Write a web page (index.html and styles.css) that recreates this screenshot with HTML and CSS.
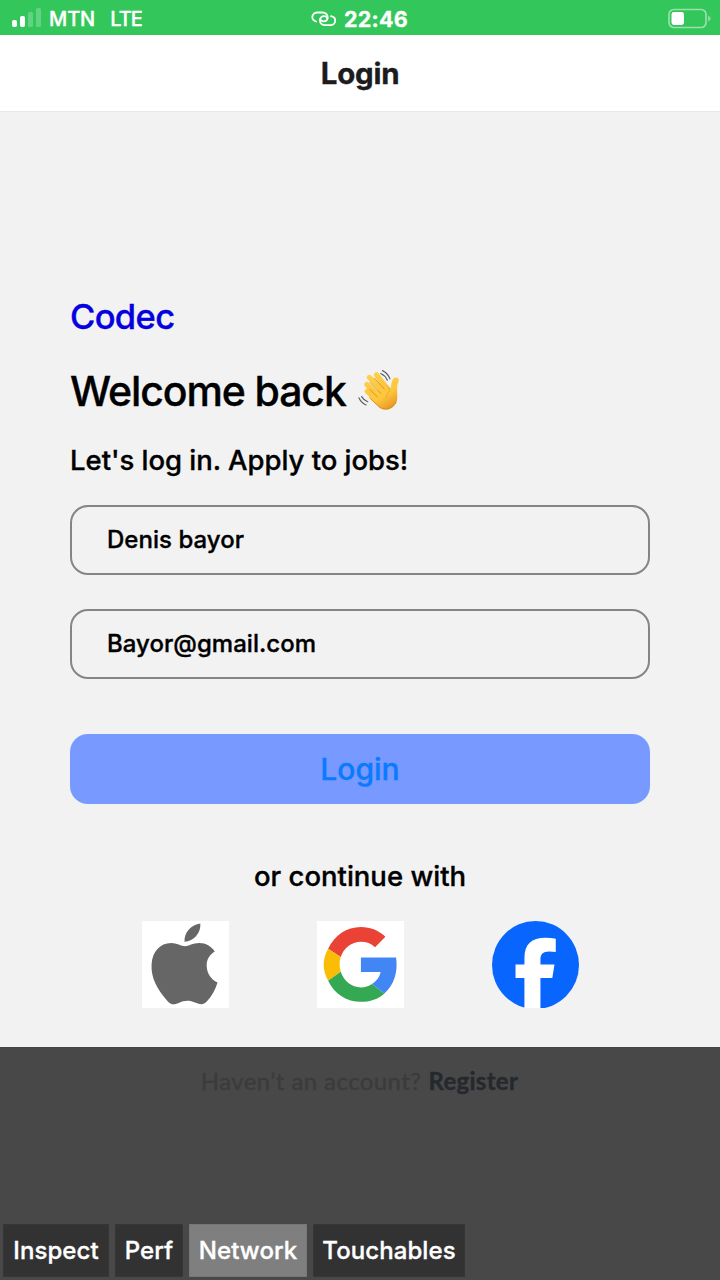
FILE: index.html
```html
<!DOCTYPE html>
<html lang="en">
<head>
<meta charset="utf-8">
<title>Login</title>
<link rel="stylesheet" href="styles.css">
</head>
<body>
<div class="screen">
  <div class="status">
    <div class="carrier">
      <svg class="signal" width="32" height="20" viewBox="0 0 32 20" fill="#fff"><rect x="1" y="12" width="5" height="7" rx="1.8"/><rect x="9" y="8" width="5" height="11" rx="1.8"/><g opacity=".23"><rect x="17" y="4" width="5" height="15" rx="1.5"/><rect x="25" y="0" width="5" height="19" rx="1.5"/></g></svg>
      <span class="mtn">MTN</span><span class="lte">LTE</span>
    </div>
    <div class="clock">
      <svg width="26" height="18" viewBox="0 0 26 18" fill="none" stroke="#fff" stroke-width="1.8" stroke-linecap="round"><path d="M5.2 11.5C2.7 10.8 1.3 9.2 1.3 7.1 1.3 4.4 3.4 2.5 6.1 2.5h5.4c3 0 5.2 2 5.2 4.7 0 2.4-1.7 4.2-4.2 4.2-1.8 0-2.8-1.1-3.1-2.5"/><path d="M20 6.2c2.6.5 4.2 2 4.2 4.2 0 2.7-2.1 4.7-4.9 4.7h-5.1c-3 0-5.3-1.9-5.3-4.7 0-2.4 1.8-4.2 4.3-4.2 1.8 0 2.9 1.1 3.2 2.5"/></svg>
      <span class="time">22:46</span>
    </div>
    <svg class="battery" width="44" height="22" viewBox="0 0 44 22"><rect x="1" y="1.5" width="37" height="18" rx="5" fill="none" stroke="#9be0ad" stroke-width="1.7"/><rect x="3.5" y="4" width="12.5" height="13" rx="2.4" fill="#fff"/><path d="M40 7.5q2.7.8 2.7 3t-2.7 3z" fill="#8bdba0"/></svg>
  </div>
  <header class="nav"><span class="nav-title">Login</span></header>
  <main class="content">
    <div class="brand"><span>Codec</span></div>
    <h1 class="welcome"><span>Welcome back</span>
      <svg class="wave" width="44" height="44" viewBox="0 0 44 44" role="img" aria-label="Waving hand">
        <defs><linearGradient id="skin" x1="0" y1="0" x2=".6" y2="1"><stop stop-color="#ffd24d"/><stop offset=".65" stop-color="#fdc63c"/><stop offset="1" stop-color="#e89b28"/></linearGradient></defs>
        <g stroke-linecap="round" fill="none">
          <g stroke="url(#skin)" stroke-width="5.2"><path d="M9.3 22.2 19 31M8.8 15.5l14 13M11.3 8.4 27 24M18.5 5.8l11.7 15"/></g>
          <path d="M14 24.7 28 16.5 32 22C33 18 33.5 12 35.3 9.7 36.8 7.8 40.7 8.3 40.7 10.6 40.7 13.5 39.1 15.3 39.1 19.5 39.2 28 40.3 31.7 36.8 36 33.3 41 26.2 42.1 21.5 38.8L10.5 28.3Z" fill="url(#skin)"/>
          <path d="M11.7 20.5 19.5 27.8M12 13.4 22.7 24.2M16.4 9.1 26.5 20.3" stroke="#dc9724" stroke-width="1"/>
          <path d="M12.5 29.6 21.5 38.1C27.5 42 35 39 37.9 33.5" stroke="#d98d22" stroke-width=".9"/>
          <path d="M32.3 21.5C29.5 24 28.3 25.5 28.6 28.5" stroke="#e4a22e" stroke-width=".8"/>
          <g stroke="#5c6065" stroke-width="1.2"><path d="M22.8 4.5Q27.2 6.5 29.3 11.2M24.5 1.6Q29.5 3.9 31.9 9.8M3.6 27.6Q5.7 31.2 9.7 32.8M1 28.9Q3.3 33.8 8.1 36"/></g>
        </g>
      </svg>
    </h1>
    <p class="tagline"><span>Let's log in. Apply to jobs!</span></p>
    <div class="field name"><span>Denis bayor</span></div>
    <div class="field email"><span>Bayor@gmail.com</span></div>
    <div class="button"><span>Login</span></div>
    <p class="or"><span>or continue with</span></p>
    <div class="social">
      <svg width="87" height="87" viewBox="0 0 88 87" preserveAspectRatio="none"><rect width="88" height="87" fill="#fff"/><path fill="#666" d="M43.5 25.2C47 25.2 51.5 22 58 22c6.5 0 12 3.3 15.6 8.4-5.3 3.2-8.3 8-8.2 14.1.1 7.8 4.3 14 11 17C74.4 68 70.8 75 65.5 80.6c-3.4 3.5-6.7 3.1-11.1 1.2-6.9-3-11.3-2.5-17.4.2-4.7 2.1-7.8 1.9-11.3-2C15.4 68.5 8.8 56.7 9.7 43.3 10.5 30.4 18.2 22.2 29.5 22c5.5 0 10.2 3.2 14 3.2ZM43 20.7C42.5 11.5 50 3.5 59 2.6c.8 9.2-6.5 18-16 18.1Z"/></svg>
      <svg width="87" height="87" viewBox="0 0 88 87" preserveAspectRatio="none"><rect width="88" height="87" fill="#fff"/><path fill="#ea4335" d="M11.3 27.8C17.6 14.4 30 6 44.4 6 54.3 6 62.8 9.7 69.2 15.7L58.7 26.2C54.8 22.4 50 20.7 44.4 20.7 35 20.7 27 27 24 36Z"/><path fill="#fbbc05" d="M11.3 27.8 24 36Q21.7 43.2 24 50.8L11.3 59.7Q2.2 43.8 11.3 27.8Z"/><path fill="#34a853" d="M24 50.8C27 60 35 66.4 44.4 66.4Q50.7 66.4 55.6 63L68.2 72.4C62 78.2 53.5 80.8 44.4 80.8 30 80.8 17.6 73 11.3 59.7Z"/><path fill="#4285f4" d="M44.4 36.6H80C82.1 51.4 77.9 64 68.2 72.4L55.6 63Q62.8 58.4 64.4 51H44.4Z"/></svg>
      <svg width="87" height="87" viewBox="0 0 88 87" preserveAspectRatio="none"><defs><clipPath id="badge"><rect width="88" height="87"/></clipPath></defs><g clip-path="url(#badge)"><circle cx="44" cy="44" r="44" fill="#0866ff"/><path fill="#fff" d="M32.8 87V57H23.8V43.5H32.8V37C32.8 23 40 16.7 54 16.7Q59.5 16.7 64.5 17.8V31Q61.5 30.5 58 30.5C51.2 30.5 49 33.3 49 38.5V43.5H63.2L61 57H49V87Z"/></g></svg>
    </div>
  </main>
  <section class="inspector">
    <p class="account"><span class="ask">Haven’t an account?</span><span class="register">Register</span></p>
    <div class="tabs">
      <div class="tab inspect"><span>Inspect</span></div>
      <div class="tab perf"><span>Perf</span></div>
      <div class="tab network"><span>Network</span></div>
      <div class="tab touch"><span>Touchables</span></div>
    </div>
  </section>
</div>
</body>
</html>
```
FILE: styles.css
```css
* { box-sizing: border-box; }
body { margin: 0; font-family: Inter, "Liberation Sans", sans-serif; font-weight: 500; color: #000; -webkit-text-stroke: .35px currentColor; }
h1, p { margin: 0; font-weight: inherit; }
svg { display: block; flex: none; }
span { white-space: nowrap; }
.screen { width: 720px; height: 1280px; display: flex; flex-direction: column; background: #f2f2f2; overflow: hidden; }
.status { height: 35px; flex: none; display: grid; grid-template-columns: 1fr auto 1fr; align-items: center; background: #33c65a; color: #fff; padding: 0 8px 0 11px; }
.carrier { display: flex; align-items: center; font-size: 20px; line-height: 35px; padding-top: 2px; }
.signal { margin: -3px 6px 0 0; }
.mtn { margin-right: 15px; letter-spacing: -.1px; }
.lte { letter-spacing: -.9px; }
.clock { display: flex; align-items: center; gap: 7px; padding: 0 4px 0 0; }
.time { font-size: 21.5px; font-weight: 700; letter-spacing: .2px; line-height: 35px; padding-top: 1px; }
.battery { justify-self: end; }
.nav { height: 77px; flex: none; display: flex; align-items: center; justify-content: center; background: #fff; border-bottom: 1px solid #e8e8e8; color: #1c1c1e; }
.nav-title { font-size: 29.5px; font-weight: 700; letter-spacing: -.25px; margin-top: -1px; }
.content { height: 935px; flex: none; display: flex; flex-direction: column; padding: 180px 70px 0; }
.brand { height: 50px; line-height: 50px; font-size: 34.5px; letter-spacing: -.65px; color: #0500e0; }
.welcome { height: 60px; margin-top: 19px; display: flex; align-items: center; gap: 12px; font-size: 41px; letter-spacing: -1.1px; }
.tagline { height: 40px; line-height: 40px; margin-top: 19px; font-size: 27.5px; letter-spacing: -.03px; }
.field { height: 70px; flex: none; margin-top: 25px; padding-left: 35px; display: flex; align-items: center; border: 2px solid #858585; border-radius: 18px; font-size: 24px; letter-spacing: .03px; }
.field span { margin-top: -1px; }
.email { margin-top: 34px; }
.button { height: 70px; flex: none; margin-top: 55px; display: flex; align-items: center; justify-content: center; border-radius: 18px; background: #7899ff; color: #0a7aff; font-size: 30px; }
.or { height: 40px; line-height: 40px; margin-top: 52px; text-align: center; font-size: 27.5px; }
.social { margin-top: 25px; display: flex; justify-content: space-between; padding: 0 71.5px; }
.inspector { flex: 1; background: #484848; border-top: 1px solid #444; display: flex; flex-direction: column; justify-content: space-between; }
.account { display: flex; justify-content: center; gap: 7px; padding: 18px 1px 0 0; font-family: Lato, sans-serif; font-size: 24px; line-height: 30px; }
.ask { color: #3b3b3b; font-weight: 400; letter-spacing: .42px; }
.register { color: #25282d; font-weight: 700; letter-spacing: .3px; }
.tabs { display: flex; gap: 6px; padding: 0 3px 3px; }
.tab { height: 53px; display: flex; align-items: center; justify-content: center; background: #323232; border: 1px solid #363636; color: #fff; font-size: 24px; letter-spacing: .08px; }
.tab span { margin-top: -1px; }
.inspect { width: 106px; }
.perf { width: 68px; }
.network { width: 118px; background: #7f7f7f; border-color: #777; }
.touch { width: 152px; }
```
